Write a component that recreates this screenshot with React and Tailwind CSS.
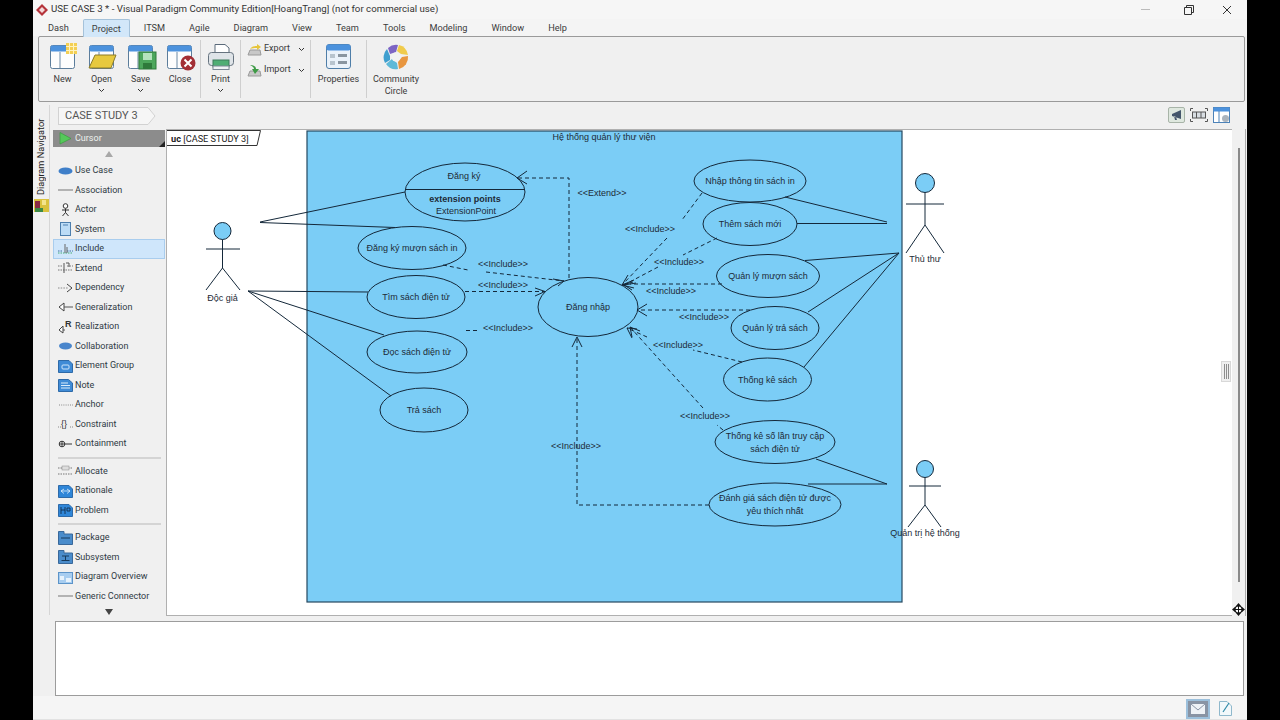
import React from "react";

const UI = "font-['Roboto','Noto_Sans',sans-serif]";
const FILL = "#7bcdf6";
const INK = "#14283a";

function WinIcon({ children, w = 34, h = 28 }) {
  return (
    <svg width={w} height={h} viewBox="0 0 34 28">
      <rect x="4.5" y="2.5" width="24" height="23" rx="2" fill="#fdfdfd" stroke="#5c7d9b" />
      <rect x="4.5" y="2.5" width="24" height="6" rx="1.5" fill="#4c92dd" />
      <line x1="14" y1="9" x2="14" y2="25" stroke="#6d8aa5" />
      {children}
    </svg>
  );
}

const ribbonIcons = {
  New: (
    <WinIcon>
      <rect x="20" y="0" width="11" height="11" fill="#f3cf53" />
      <path d="M20 3.5H31M20 7.5H31M23.5 0V11M27.5 0V11" stroke="#fff3c0" />
    </WinIcon>
  ),
  Open: (
    <WinIcon>
      <path d="M4 25 L10 12 H31 L26 25 Z" fill="#e7c93e" stroke="#8b7b28" />
    </WinIcon>
  ),
  Save: (
    <WinIcon>
      <rect x="15" y="9" width="17" height="17" fill="#4da75c" stroke="#2f7a3b" />
      <rect x="19" y="10" width="9" height="7" fill="#b5e3bd" />
      <rect x="19" y="20" width="9" height="6" fill="#2f7a3b" />
    </WinIcon>
  ),
  Close: (
    <WinIcon>
      <circle cx="25" cy="20" r="7.5" fill="#a32f35" />
      <path d="M21.5 16.5 L28.5 23.5 M28.5 16.5 L21.5 23.5" stroke="#fff" strokeWidth="2" />
    </WinIcon>
  ),
  Print: (
    <svg width="34" height="28" viewBox="0 0 34 28">
      <path d="M11 10 V1.5 H21 L25 5 V10" fill="#fff" stroke="#5a6a7a" />
      <rect x="4.5" y="9.5" width="25" height="13" rx="3" fill="#dfe4e8" stroke="#66737f" />
      <rect x="9" y="17" width="16" height="7" fill="#4fae74" stroke="#3d7a5a" />
      <rect x="9" y="23" width="16" height="3.5" fill="#eef2f4" stroke="#7b8894" />
    </svg>
  ),
  Properties: (
    <svg width="34" height="28" viewBox="0 0 34 28">
      <rect x="4.5" y="1.5" width="24" height="24" rx="2.5" fill="#eaf2fa" stroke="#4f7ea8" />
      <rect x="4.5" y="1.5" width="24" height="6" rx="2" fill="#4c92dd" />
      <rect x="8" y="11" width="5" height="4" fill="#b8c4ce" />
      <rect x="8" y="18" width="5" height="4" fill="#b8c4ce" />
      <rect x="16" y="11" width="9" height="3" fill="#8995a0" />
      <rect x="16" y="18" width="9" height="3" fill="#8995a0" />
    </svg>
  ),
  Community: (
    <svg width="28" height="28" viewBox="0 0 28 28">
      <path d="M6 5 A12 12 0 0 1 16 2 L14 9 L8 11 Z" fill="#7d65c4" />
      <path d="M17 2 A12 12 0 0 1 26 12 L19 11 L15 8 Z" fill="#f0cb4b" />
      <path d="M26 13 A12 12 0 0 1 17 26 L16 19 L20 14 Z" fill="#e8963f" />
      <path d="M16 26 A12 12 0 0 1 4 21 L10 16 L15 20 Z" fill="#5eb9d8" />
      <path d="M3 20 A12 12 0 0 1 5 6 L8 13 L8 17 Z" fill="#3f9fcf" />
      <circle cx="14" cy="14" r="4.5" fill="#f2f2f2" />
    </svg>
  ),
};

function Chevron({ className = "" }) {
  return (
    <svg width="7" height="5" viewBox="0 0 7 5" className={className}>
      <path d="M1 1 L3.5 3.5 L6 1" fill="none" stroke="#333" strokeWidth="1" />
    </svg>
  );
}

function RibbonBtn({ icon, label, label2, chevron, w }) {
  return (
    <div className={`flex h-full flex-col items-center pt-[7px] ${w}`}>
      <div className="flex h-[26px] items-center justify-center">{ribbonIcons[icon]}</div>
      <div className="mt-[3px] text-center text-[9px] leading-[12px] text-[#3a3a3a]">{label}</div>
      {label2 && <div className="text-center text-[9px] leading-[12px] text-[#3a3a3a]">{label2}</div>}
      {chevron && <Chevron className="mt-[3px]" />}
    </div>
  );
}

function Sep() {
  return <div className="my-[3px] w-px self-stretch bg-[#cfcfcf]" />;
}

const tabs = ["Dash", "Project", "ITSM", "Agile", "Diagram", "View", "Team", "Tools", "Modeling", "Window", "Help"];

const Blue = ({ children }) => (
  <svg width="15" height="14" viewBox="0 0 15 14" className="shrink-0">
    {children}
  </svg>
);

const palIcons = {
  usecase: <Blue><ellipse cx="7.5" cy="7" rx="7" ry="3.6" fill="#3f7fc9" /></Blue>,
  line: <Blue><line x1="0" y1="7" x2="15" y2="7" stroke="#777" /></Blue>,
  actor: (
    <Blue>
      <circle cx="7.5" cy="3" r="2.3" fill="#fff" stroke="#333" />
      <path d="M7.5 5.5V9.5M4 7H11M7.5 9.5L4.5 13M7.5 9.5L10.5 13" stroke="#333" fill="none" />
    </Blue>
  ),
  system: <Blue><rect x="2.5" y="0.5" width="10" height="13" fill="#bcdcf6" stroke="#4d7fae" /><line x1="5" y1="3" x2="10" y2="3" stroke="#4d7fae" /></Blue>,
  include: (
    <Blue>
      <path d="M0 9H5M9 9H15" stroke="#3f6ea0" strokeDasharray="1.5 1" />
      <path d="M0 11H15" stroke="#4a7" strokeDasharray="1.5 1" />
      <path d="M7 2V11M9 5V11" stroke="#666" />
    </Blue>
  ),
  extend: (
    <Blue>
      <path d="M0 5H5M9 5H15M0 9H15" stroke="#777" strokeDasharray="1.5 1" />
      <path d="M6 2V12M8 2H11V6" stroke="#555" fill="none" />
    </Blue>
  ),
  dep: <Blue><path d="M0 7H10" stroke="#888" strokeDasharray="1.5 1.2" /><path d="M9 3L14 7L9 11" fill="none" stroke="#444" /></Blue>,
  gen: <Blue><path d="M6 3L1 7L6 11Z" fill="#fff" stroke="#444" /><line x1="6" y1="7" x2="15" y2="7" stroke="#555" /></Blue>,
  real: (
    <Blue>
      <path d="M5 6L1 10L5 13Z" fill="#fff" stroke="#444" />
      <path d="M5 10H7" stroke="#555" />
      <text x="7" y="7" fontSize="9" fontWeight="700" fontFamily="Liberation Sans" fill="#333">R</text>
    </Blue>
  ),
  collab: <Blue><ellipse cx="7.5" cy="7" rx="6.5" ry="3.4" fill="#4a86cc" /></Blue>,
  group: <Blue><path d="M0.5 1.5H11L14.5 5V13.5H0.5Z" fill="#3f8bd6" stroke="#2e6aa8" /><rect x="4" y="6" width="7" height="4" rx="1" fill="none" stroke="#cfe6fb" /></Blue>,
  note: <Blue><path d="M0.5 1.5H10.5L14.5 5V13.5H0.5Z" fill="#3f8bd6" stroke="#2e6aa8" /><path d="M3 5H10M3 7.5H12M3 10H12" stroke="#dcedfb" /></Blue>,
  anchor: <Blue><line x1="1" y1="7" x2="15" y2="7" stroke="#888" strokeDasharray="1 1.2" /></Blue>,
  constraint: (
    <Blue>
      <path d="M0 10H3M12 10H15" stroke="#888" strokeDasharray="1 1" />
      <text x="3" y="10" fontSize="9" fontFamily="Liberation Sans" fill="#333">{"{}"}</text>
    </Blue>
  ),
  contain: <Blue><circle cx="4" cy="7" r="2.8" fill="#fff" stroke="#333" /><path d="M1.2 7H6.8M4 4.2V9.8M6.8 7H14" stroke="#333" /></Blue>,
  allocate: (
    <Blue>
      <path d="M0 4H15M0 10H15" stroke="#777" strokeDasharray="1.5 1" />
      <rect x="4" y="2" width="7" height="4" fill="#ddd" stroke="#888" strokeWidth="0.5" />
    </Blue>
  ),
  rationale: <Blue><path d="M0.5 1.5H11L14.5 5V13.5H0.5Z" fill="#2f86d8" stroke="#2e6aa8" /><path d="M3 7L6 5M3 7L6 9.5M12 7L9 5M12 7L9 9.5M3 7H12" stroke="#e2f0fc" fill="none" strokeWidth="0.8" /></Blue>,
  problem: <Blue><path d="M0.5 1.5H11L14.5 5V13.5H0.5Z" fill="#2f86d8" stroke="#2e6aa8" /><path d="M3 4V11M3 7H7M7 4V11M9 5H12V8H9Z" stroke="#12304e" fill="none" strokeWidth="0.9" /></Blue>,
  pack: <Blue><path d="M0.5 0.5H6V3H14.5V13.5H0.5Z" fill="#4a8ccb" stroke="#39689a" /><line x1="3" y1="7" x2="12" y2="7" stroke="#163a5c" /></Blue>,
  sub: <Blue><path d="M0.5 0.5H6V3H14.5V13.5H0.5Z" fill="#4a8ccb" stroke="#39689a" /><path d="M4 6H11M7.5 6V10M3.5 10.5H11.5" stroke="#163a5c" /></Blue>,
  overview: <Blue><rect x="0.5" y="2.5" width="14" height="11" fill="#a7cdf0" stroke="#5c94c9" /><path d="M2 6H6V10H2ZM8 8H13V12H8Z" fill="#e6f2fc" /></Blue>,
};

const group1 = [
  ["usecase", "Use Case"], ["line", "Association"], ["actor", "Actor"], ["system", "System"],
  ["include", "Include", true], ["extend", "Extend"], ["dep", "Dependency"], ["gen", "Generalization"],
  ["real", "Realization"], ["collab", "Collaboration"], ["group", "Element Group"], ["note", "Note"],
  ["anchor", "Anchor"], ["constraint", "Constraint"], ["contain", "Containment"],
];
const group2 = [["allocate", "Allocate"], ["rationale", "Rationale"], ["problem", "Problem"]];
const group3 = [["pack", "Package"], ["sub", "Subsystem"], ["overview", "Diagram Overview"], ["line", "Generic Connector"]];

function PalRow({ icon, label, active }) {
  return (
    <div className={`flex h-[19.5px] shrink-0 items-center gap-[2px] pl-[5px] text-[9px] text-[#2f3a44] ${active ? "bg-[#cfe6fb] outline outline-1 -outline-offset-1 outline-[#a9cdee]" : ""}`}>
      {palIcons[icon]}
      <span>{label}</span>
    </div>
  );
}

function PalSep() {
  return (
    <div className="flex h-[8px] shrink-0 items-center pl-[5px] pr-[4px]">
      <div className="h-[2px] w-full bg-[#d4d4d4]" />
    </div>
  );
}

const ellipses = [
  [412, 248, 54, 21.5, ["Đăng ký mượn sách in"]],
  [416, 297, 49, 21.5, ["Tìm sách điện tử"]],
  [417, 352, 50, 21, ["Đọc sách điện tử"]],
  [424, 410, 44, 22, ["Trả sách"]],
  [588, 307, 50, 29.5, ["Đăng nhập"]],
  [750, 181, 56, 21, ["Nhập thông tin sách in"]],
  [750, 224, 47, 21.5, ["Thêm sách mới"]],
  [768, 276, 51.5, 21.5, ["Quản lý mượn sách"]],
  [775, 328, 44, 21.5, ["Quản lý trả sách"]],
  [767.5, 379.5, 44, 21.5, ["Thống kê sách"]],
  [775, 442, 60, 21.5, ["Thống kê số lần truy cập", "sách điện tử"]],
  [775, 504.5, 66, 21.5, ["Đánh giá sách điện tử được", "yêu thích nhất"]],
];

const solid = [
  [260, 222, 405, 192], [260, 222.5, 395, 227.5], [248, 291, 368, 292], [248, 291, 384, 335], [248, 291, 391, 396],
  [785, 197, 887, 222], [797, 223.5, 887, 223.5], [805, 260.5, 899, 253], [808, 312, 899, 253], [804, 367, 899, 253],
  [816, 459, 887, 484], [808, 484, 887, 484],
];

const dashed = [
  "M569 278V178H517",
  "M443 265L468 270",
  "M486 272L564 281",
  "M465 291.5H545",
  "M466 330.5H480",
  "M702 193L682 220",
  "M667 238L622 285",
  "M717 238L683 255",
  "M658 267L624 285",
  "M722 284H630",
  "M750 310H637",
  "M742 362L693 350",
  "M647 337L627 328",
  "M723 430L717 425",
  "M703 408L630 327",
  "M709 505H577V337",
];

function arrow(x, y, ax1, ay1, ax2, ay2) {
  return `M${ax1} ${ay1}L${x} ${y}L${ax2} ${ay2}`;
}
const arrows = [
  arrow(517, 178, 527, 171, 527, 184),
  arrow(564, 281, 553, 279, 558, 286),
  arrow(545, 291.5, 535, 288, 535, 296),
  arrow(622, 285, 628, 275, 633, 282),
  arrow(622, 285, 634, 280, 634, 288),
  arrow(624, 285, 636, 283, 632, 290),
  arrow(637, 310, 647, 304, 647, 316),
  arrow(627, 328, 637, 329, 632, 338),
  arrow(630, 327, 632, 337, 640, 331),
  arrow(577, 337, 572, 347, 582, 347),
];

const labels = [
  ["<<Extend>>", 602, 193], ["<<Include>>", 503, 264], ["<<Include>>", 503, 285], ["<<Include>>", 508, 328],
  ["<<Include>>", 650, 229], ["<<Include>>", 679, 262], ["<<Include>>", 671, 291], ["<<Include>>", 704, 317],
  ["<<Include>>", 678, 345], ["<<Include>>", 705, 416], ["<<Include>>", 576, 446],
];

const T = ({ x, y, children, weight }) => (
  <text x={x} y={y} textAnchor="middle" dominantBaseline="central" fontSize="9" fontWeight={weight} fontFamily="'Liberation Sans', sans-serif" fill="#1d2b36">
    {children}
  </text>
);

function Actor({ cx, hy, r, armY, armL, armR, hip, footY, footL, footR, label, ly }) {
  return (
    <g stroke={INK} fill="none">
      <circle cx={cx} cy={hy} r={r} fill={FILL} />
      <path d={`M${cx} ${hy + r}V${hip}M${armL} ${armY}H${armR}M${cx} ${hip}L${footL} ${footY}M${cx} ${hip}L${footR} ${footY}`} />
      <g stroke="none"><T x={cx} y={ly}>{label}</T></g>
    </g>
  );
}

function Diagram() {
  return (
    <svg className="absolute left-0 top-0" width="1065" height="485" viewBox="167 130 1065 485">
      <rect x="307" y="131" width="595" height="471" fill={FILL} stroke="#25485f" strokeWidth="1.2" />
      <T x={604} y={137}>Hệ thống quản lý thư viện</T>
      <g fill={FILL} stroke={INK} strokeWidth="1">
        <ellipse cx="465" cy="192" rx="60" ry="29" />
        {ellipses.map(([cx, cy, rx, ry], i) => <ellipse key={i} cx={cx} cy={cy} rx={rx} ry={ry} />)}
      </g>
      <line x1="405" y1="189.5" x2="524" y2="189.5" stroke={INK} />
      <T x={464} y={176}>Đăng ký</T>
      <T x={465} y={199} weight="700">extension points</T>
      <T x={466} y={211}>ExtensionPoint</T>
      {ellipses.map(([cx, cy, , , lines], i) =>
        lines.length === 1 ? (
          <T key={i} x={cx} y={cy}>{lines[0]}</T>
        ) : (
          <g key={i}>
            <T x={cx} y={cy - 6.5}>{lines[0]}</T>
            <T x={cx} y={cy + 6.5}>{lines[1]}</T>
          </g>
        )
      )}
      <g stroke={INK} strokeWidth="1">
        {solid.map(([a, b, c, d], i) => <line key={i} x1={a} y1={b} x2={c} y2={d} />)}
      </g>
      <g stroke={INK} fill="none" strokeWidth="1">
        {dashed.map((d, i) => <path key={i} d={d} strokeDasharray="4 3" />)}
        {arrows.map((d, i) => <path key={i} d={d} />)}
      </g>
      {labels.map(([t, x, y], i) => <T key={i} x={x} y={y}>{t}</T>)}
      <Actor cx={222.5} hy={231} r={8.5} armY={249} armL={206} armR={240} hip={268} footY={290} footL={206} footR={240} label="Độc giả" ly={298} />
      <Actor cx={925} hy={183} r={9.5} armY={204} armL={906} armR={944} hip={225} footY={253} footL={906} footR={944} label="Thủ thư" ly={259} />
      <Actor cx={925} hy={469} r={8.5} armY={486} armL={909} armR={941} hip={505} footY={527} footL={908} footR={941} label="Quản trị hệ thống" ly={533} />
    </svg>
  );
}

export default function App() {
  return (
    <div className={`flex h-[720px] w-[1280px] justify-center overflow-hidden bg-black ${UI}`}>
      <div className="flex h-full w-[1214px] flex-col bg-[#f0f0f0]">
        {/* title bar */}
        <div className="flex h-[19px] shrink-0 items-center bg-[#f6f6f6] pl-[2px]">
          <svg width="14" height="14" viewBox="0 0 14 14">
            <path d="M7 1 L13 7 L7 13 L1 7 Z" fill="#b5333b" />
            <path d="M7 4 L10 7 L7 10 L4 7 Z" fill="#f3d9d9" />
          </svg>
          <span className="ml-[2px] text-[9.7px] text-[#333]">USE CASE 3 * - Visual Paradigm Community Edition[HoangTrang] (not for commercial use)</span>
          <div className="ml-auto flex h-full items-center pr-[15px]">
            <div className="h-px w-[9px] bg-[#bbb]" />
            <svg width="10" height="10" viewBox="0 0 10 10" className="ml-[34px]">
              <path d="M0.5 2.5H7.5V9.5H0.5ZM2.5 2.5V0.5H9.5V7.5H7.5" fill="none" stroke="#333" />
            </svg>
            <svg width="10" height="10" viewBox="0 0 10 10" className="ml-[28px]">
              <path d="M1 1L9 9M9 1L1 9" stroke="#333" />
            </svg>
          </div>
        </div>

        {/* tabs */}
        <div className="flex h-[17px] shrink-0 items-stretch bg-[#f4f4f4] pl-[3px] text-[9.2px] text-[#3c3c3c]">
          {tabs.map((t) =>
            t === "Project" ? (
              <div key={t} className="relative z-10 mx-[2px] flex h-[18px] w-[47px] items-center justify-center rounded-t-[2px] border border-b-0 border-[#a5c2da] bg-[#d2e7f9]">{t}</div>
            ) : (
              <div key={t} className="flex items-center px-[12px]">{t}</div>
            )
          )}
        </div>

        {/* ribbon */}
        <div className="ml-[5px] mr-[2px] flex h-[66px] shrink-0 items-stretch rounded-[2px] border border-[#9a9a9a] bg-[#f0f0f0] pl-[4px]">
          <RibbonBtn icon="New" label="New" w="w-[39px]" />
          <RibbonBtn icon="Open" label="Open" chevron w="w-[39px]" />
          <RibbonBtn icon="Save" label="Save" chevron w="w-[39px]" />
          <RibbonBtn icon="Close" label="Close" w="w-[40px]" />
          <Sep />
          <RibbonBtn icon="Print" label="Print" chevron w="w-[39px]" />
          <Sep />
          <div className="flex w-[69px] flex-col gap-[7px] pl-[6px] pt-[5px] text-[9px] text-[#3a3a3a]">
            <div className="flex h-[14px] items-center">
              <svg width="15" height="13" viewBox="0 0 15 13">
                <path d="M1 12 L3 7 H13 L14 12 Z" fill="#c8c8c8" stroke="#9a9a9a" />
                <path d="M3 6 C5 3 8 3 10 3 V1 L14 4 L10 7 V5 C8 5 6 5 3 6Z" fill="#e6c53b" />
              </svg>
              <span className="ml-[2px] w-[29px]">Export</span>
              <Chevron className="ml-[5px]" />
            </div>
            <div className="flex h-[14px] items-center">
              <svg width="15" height="13" viewBox="0 0 15 13">
                <path d="M1 12 L3 7 H13 L14 12 Z" fill="#c8c8c8" stroke="#9a9a9a" />
                <path d="M3 1 C6 1 9 2 9 5 H12 L8 10 L5 5 H7 C7 3 5 2 3 1Z" fill="#3d9a45" />
              </svg>
              <span className="ml-[2px] w-[29px]">Import</span>
              <Chevron className="ml-[5px]" />
            </div>
          </div>
          <Sep />
          <RibbonBtn icon="Properties" label="Properties" w="w-[55px]" />
          <Sep />
          <RibbonBtn icon="Community" label="Community" label2="Circle" w="w-[58px]" />
        </div>

        {/* main */}
        <div className="flex min-h-0 flex-1 flex-col pt-[3px]">
          <div className="flex min-h-0 flex-1">
            {/* navigator strip */}
            <div className="flex w-[17px] shrink-0 flex-col items-center border-r border-[#d6d6d6] pt-[8px]">
              <div className="h-[82px] whitespace-nowrap text-[9.2px] leading-[16px] text-[#222] [writing-mode:vertical-rl] rotate-180">Diagram Navigator</div>
              <svg width="15" height="15" viewBox="0 0 15 15" className="mt-[3px]">
                <rect x="0" y="1" width="15" height="13" fill="#d9c23e" />
                <rect x="1" y="3" width="5" height="9" fill="#8a2b45" />
                <rect x="1" y="10" width="8" height="4" fill="#3d8a45" />
                <rect x="8" y="2" width="4" height="5" fill="#f3e48d" />
              </svg>
            </div>

            {/* column with breadcrumb */}
            <div className="flex min-w-0 flex-1 flex-col">
              <div className="flex h-[24px] shrink-0 items-start pl-[8px] pr-[16px] pt-[2px]">
                <div className="relative flex h-[18px] w-[90px] items-center border-y border-l border-[#d2d2d2] bg-[#f6f6f6] pl-[6px] text-[11px] text-[#555]">
                  CASE STUDY 3
                  <svg width="8" height="18" viewBox="0 0 8 18" className="absolute -right-[8px] -top-px">
                    <path d="M0 0.5 L7 9 L0 17.5" fill="#f6f6f6" stroke="#d2d2d2" />
                  </svg>
                </div>
                <div className="ml-auto flex items-center gap-[5px]">
                  <div className="flex h-[16px] w-[17px] items-center justify-center rounded-[2px] border border-[#a8b4a8] bg-[#dfe8df]">
                    <svg width="12" height="12" viewBox="0 0 12 12"><path d="M1 5 L10 1 V10 L1 7Z M3 7 L4 11 H6 L5 8Z" fill="#44566b" /></svg>
                  </div>
                  <svg width="18" height="14" viewBox="0 0 18 14">
                    <path d="M0.5 3V0.5H3M15 0.5H17.5V3M0.5 11V13.5H3M15 13.5H17.5V11" fill="none" stroke="#555" />
                    <rect x="2.5" y="4" width="13" height="6" fill="#d8dde2" stroke="#555" />
                    <path d="M6.5 4V10M11 4V10" stroke="#555" />
                  </svg>
                  <svg width="18" height="16" viewBox="0 0 18 16">
                    <rect x="0.5" y="0.5" width="16" height="15" fill="#fff" stroke="#4c82b8" />
                    <rect x="0.5" y="0.5" width="16" height="4" fill="#4c92dd" />
                    <line x1="6" y1="4" x2="6" y2="15" stroke="#4c82b8" />
                    <circle cx="12.5" cy="11.5" r="3.5" fill="#aab4be" />
                  </svg>
                </div>
              </div>

              <div className="flex min-h-0 flex-1 pl-[3px] pr-[1px]">
                {/* palette */}
                <div className="flex w-[112px] shrink-0 flex-col pt-[1px]">
                  <div className="relative flex h-[17px] shrink-0 items-center gap-[3px] bg-[#8c8c8c] pl-[6px] text-[9px] text-[#eef2ee]">
                    <svg width="13" height="13" viewBox="0 0 13 13"><path d="M1 0.5 L12 6.5 L1 12 Z" fill="#55c85a" stroke="#3a9a40" strokeOpacity="0.7" /></svg>
                    Cursor
                    <svg width="6" height="6" viewBox="0 0 6 6" className="absolute bottom-0 right-0"><path d="M6 0V6H0Z" fill="#222" /></svg>
                  </div>
                  <div className="flex h-[14px] shrink-0 items-center justify-center">
                    <svg width="8" height="6" viewBox="0 0 8 6"><path d="M4 0L8 6H0Z" fill="#a8a8a8" /></svg>
                  </div>
                  {group1.map(([i, l, a]) => <PalRow key={l} icon={i} label={l} active={a} />)}
                  <PalSep />
                  {group2.map(([i, l]) => <PalRow key={l} icon={i} label={l} />)}
                  <PalSep />
                  {group3.map(([i, l]) => <PalRow key={l} icon={i} label={l} />)}
                  <div className="flex h-[12px] shrink-0 items-center justify-center">
                    <svg width="8" height="6" viewBox="0 0 8 6"><path d="M0 0H8L4 6Z" fill="#444" /></svg>
                  </div>
                </div>

                {/* canvas */}
                <div className="ml-[1px] flex h-[487px] min-w-0 flex-1">
                  <div className="relative h-full min-w-0 flex-1 border-y border-l border-[#b0b0b0] bg-white">
                    <Diagram />
                    <svg width="95" height="17" viewBox="0 0 95 17" className="absolute left-0 top-0">
                      <path d="M0 0.5H93.5L90 15.5H0" fill="#fff" stroke="#333" />
                      <text x="4" y="11.5" fontSize="9.2" fontFamily="Roboto, sans-serif" fill="#222"><tspan fontWeight="700">uc</tspan> [CASE STUDY 3]</text>
                    </svg>
                    <div className="absolute right-[1px] top-[231px] flex h-[21px] w-[10px] items-center justify-center gap-[1px] border border-[#d8d8d8] bg-[#efefef]">
                      <div className="h-[15px] w-px bg-[#8d8d8d]" />
                      <div className="h-[15px] w-px bg-[#8d8d8d]" />
                      <div className="h-[15px] w-px bg-[#8d8d8d]" />
                    </div>
                  </div>
                  <div className="relative flex w-[14px] shrink-0 flex-col items-center border-r border-[#a9a9a9] bg-[#f0f0f0]">
                    <div className="mt-[19px] h-[434px] w-[2px] bg-[#8a8a8a]" />
                    <svg width="13" height="13" viewBox="0 0 13 13" className="absolute bottom-0 left-0">
                      <path d="M6.5 0L9 3H4ZM6.5 13L4 10H9ZM0 6.5L3 4V9ZM13 6.5L10 9V4Z" fill="#111" />
                      <circle cx="6.5" cy="6.5" r="3.5" fill="#fff" stroke="#111" strokeWidth="1.2" />
                      <path d="M6.5 3V10M3 6.5H10" stroke="#111" />
                    </svg>
                  </div>
                </div>
              </div>
            </div>
          </div>

          {/* description panel */}
          <div className="ml-[22px] mr-[3px] mt-[6px] h-[75px] shrink-0 border border-[#9c9c9c] bg-white" />

          {/* status bar */}
          <div className="flex h-[24px] shrink-0 items-center justify-end border-b border-[#e2e2e2] bg-[#f5f5f5] pr-[15px] pt-[2px]">
            <div className="flex h-[20px] w-[24px] items-center justify-center border-2 border-[#9cc0dc] bg-[#8994a4]">
              <svg width="14" height="10" viewBox="0 0 14 10"><rect width="14" height="10" fill="#eef2f6" /><path d="M0 0L7 6L14 0" fill="none" stroke="#8994a4" /></svg>
            </div>
            <svg width="13" height="15" viewBox="0 0 13 15" className="ml-[9px]">
              <path d="M0.5 0.5H8L12.5 5V14.5H0.5Z" fill="#f2f8fb" stroke="#8fb8cc" />
              <path d="M4 11L10 2" stroke="#2f8aa8" strokeWidth="1.2" />
            </svg>
          </div>
        </div>
      </div>
    </div>
  );
}
